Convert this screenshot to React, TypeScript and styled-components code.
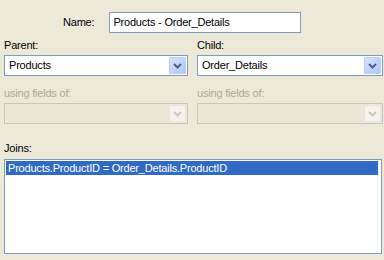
import React from 'react'
import styled, { createGlobalStyle } from 'styled-components'

const GlobalStyle = createGlobalStyle`
  html, body {
    margin: 0;
    padding: 0;
    background: #ece9d8;
  }
  body {
    font-family: "Liberation Sans", Arial, sans-serif;
    font-size: 11px;
    letter-spacing: -0.2px;
    color: #000;
  }
`

const Dialog = styled.div`
  width: 384px;
  height: 260px;
  box-sizing: border-box;
  padding: 12px 2px 0 4px;
  background: #ece9d8;
  display: flex;
  flex-direction: column;
`

const NameRow = styled.div`
  display: flex;
  align-items: center;
  padding-left: 59px;
  gap: 15px;
`

const Label = styled.div<{ disabled?: boolean }>`
  height: 13px;
  line-height: 13px;
  color: ${({ disabled }) => (disabled ? '#aca899' : '#000')};
`

const TextBox = styled.div`
  width: 192px;
  height: 21px;
  box-sizing: border-box;
  border: 1px solid #7f9db9;
  background: #fff;
  padding: 0 3px;
  line-height: 19px;
`

const Grid = styled.div<{ top: number }>`
  display: grid;
  grid-template-columns: 184px 186px;
  column-gap: 9px;
  margin-top: ${({ top }) => top}px;
`

const Field = styled.div<{ gap?: number; top?: number }>`
  display: flex;
  flex-direction: column;
  gap: ${({ gap = 3 }) => gap}px;
  margin-top: ${({ top = 0 }) => top}px;
`

const Combo = styled.div<{ disabled?: boolean }>`
  height: 21px;
  box-sizing: border-box;
  border: 1px solid ${({ disabled }) => (disabled ? '#c9c7ba' : '#7f9db9')};
  background: ${({ disabled }) => (disabled ? '#ebe8d7' : '#fff')};
  display: flex;
  align-items: stretch;
  padding: 1px;
`

const ComboText = styled.div`
  flex: 1;
  padding-left: 3px;
  line-height: 17px;
  white-space: nowrap;
  overflow: hidden;
`

const ComboButton = styled.div<{ disabled?: boolean }>`
  width: 17px;
  box-sizing: border-box;
  border-radius: 1px;
  display: flex;
  align-items: center;
  justify-content: center;
  border: 1px solid ${({ disabled }) => (disabled ? '#e6e4dc' : '#bccdf7')};
  background: ${({ disabled }) =>
    disabled
      ? '#f4f3ee'
      : 'linear-gradient(135deg, #d8e3fc 0%, #c2d3fb 50%, #b3c8f6 100%)'};
`

const ListBox = styled.div`
  width: 378px;
  height: 95px;
  box-sizing: border-box;
  border: 1px solid #7f9db9;
  background: #fff;
  padding: 1px 3px 0 1px;
`

const ListItem = styled.div<{ selected?: boolean }>`
  height: 14px;
  line-height: 14px;
  padding-left: 2px;
  background: ${({ selected }) => (selected ? '#316ac5' : 'transparent')};
  color: ${({ selected }) => (selected ? '#fff' : '#000')};
  white-space: nowrap;
`

const Arrow = ({ color }: { color: string }) => (
  <svg width="9" height="6" viewBox="0 0 9 6">
    <path d="M1 1 L4.5 4.5 L8 1" fill="none" stroke={color} strokeWidth="2" />
  </svg>
)

const ComboBox = ({ value, disabled }: { value?: string; disabled?: boolean }) => (
  <Combo disabled={disabled}>
    <ComboText>{value}</ComboText>
    <ComboButton disabled={disabled}>
      <Arrow color={disabled ? '#c9c7ba' : '#4d6185'} />
    </ComboButton>
  </Combo>
)

export default function App() {
  return (
    <>
      <GlobalStyle />
      <Dialog>
        <NameRow>
          <Label>Name:</Label>
          <TextBox>Products - Order_Details</TextBox>
        </NameRow>

        <Grid top={6}>
          <Field>
            <Label>Parent:</Label>
            <ComboBox value="Products" />
          </Field>
          <Field>
            <Label>Child:</Label>
            <ComboBox value="Order_Details" />
          </Field>
        </Grid>

        <Grid top={11}>
          <Field>
            <Label disabled>using fields of:</Label>
            <ComboBox disabled />
          </Field>
          <Field>
            <Label disabled>using fields of:</Label>
            <ComboBox disabled />
          </Field>
        </Grid>

        <Field top={18} gap={4}>
          <Label>Joins:</Label>
          <ListBox>
            <ListItem selected>Products.ProductID = Order_Details.ProductID</ListItem>
          </ListBox>
        </Field>
      </Dialog>
    </>
  )
}
